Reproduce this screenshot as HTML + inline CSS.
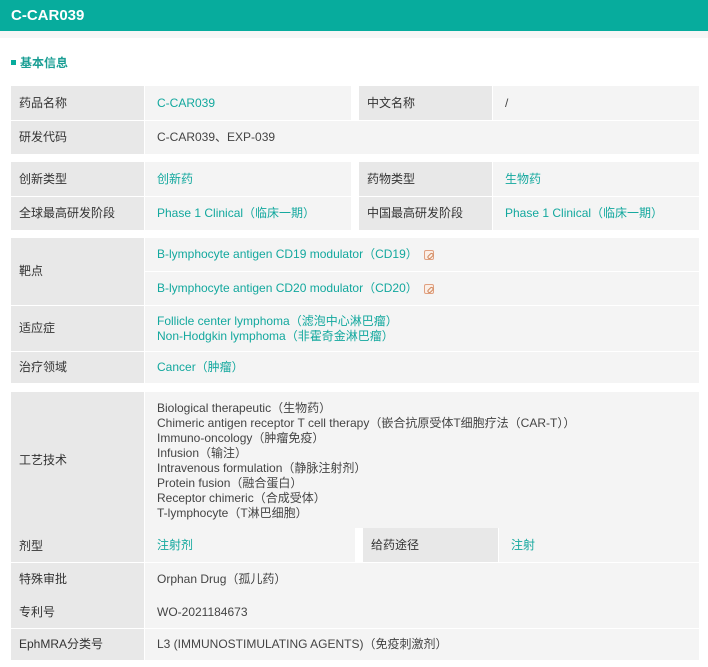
<!DOCTYPE html><html><head><meta charset="utf-8"><style>
*{margin:0;padding:0;box-sizing:border-box}
body{width:708px;height:667px;background:#fff;font-family:"Liberation Sans","Noto Sans CJK SC",sans-serif;font-size:12px;color:#444;position:relative;overflow:hidden}
.hd{position:absolute;left:0;top:0;width:708px;height:31px;background:#07ac9d;color:#fff;font-weight:bold;font-size:15px;line-height:31px;padding-left:11px}
.strip{position:absolute;left:0;top:31px;width:708px;height:7px;background:#f6f6f6}
.st{position:absolute;left:11px;top:55px;color:#1a9e94;font-weight:bold;font-size:12px;line-height:16px}
.st:before{content:"";display:inline-block;width:5px;height:5px;background:#07ac9d;margin-right:4px;vertical-align:2px}
.c{position:absolute;display:flex;align-items:center;padding-left:8px;line-height:15px}
.l{background:#e8e8e8;color:#333}
.v{background:#f4f4f4;padding-left:12px}
.g{color:#13a89e}
.ic{display:inline-block;width:10px;height:10px;border:1px solid #e0a080;border-radius:2px;margin-left:6px;position:relative;background:#fbeee6}
.ic:after{content:"";position:absolute;left:2px;top:3px;width:5px;height:2px;border:1px solid #d08a60;border-radius:2px;transform:rotate(-45deg)}
</style></head><body>
<div class="hd">C-CAR039</div><div class="strip"></div>
<div class="st">基本信息</div>

<div class="c l" style="left:11px;top:86px;width:133px;height:34px">药品名称</div>
<div class="c v g" style="left:145px;top:86px;width:206px;height:34px">C-CAR039</div>
<div class="c l" style="left:359px;top:86px;width:133px;height:34px">中文名称</div>
<div class="c v" style="left:493px;top:86px;width:206px;height:34px">/</div>
<div class="c l" style="left:11px;top:121px;width:133px;height:33px">研发代码</div>
<div class="c v" style="left:145px;top:121px;width:554px;height:33px">C-CAR039、EXP-039</div>

<div class="c l" style="left:11px;top:162px;width:133px;height:34px">创新类型</div>
<div class="c v g" style="left:145px;top:162px;width:206px;height:34px">创新药</div>
<div class="c l" style="left:359px;top:162px;width:133px;height:34px">药物类型</div>
<div class="c v g" style="left:493px;top:162px;width:206px;height:34px">生物药</div>
<div class="c l" style="left:11px;top:197px;width:133px;height:33px">全球最高研发阶段</div>
<div class="c v g" style="left:145px;top:197px;width:206px;height:33px">Phase 1 Clinical（临床一期）</div>
<div class="c l" style="left:359px;top:197px;width:133px;height:33px">中国最高研发阶段</div>
<div class="c v g" style="left:493px;top:197px;width:206px;height:33px">Phase 1 Clinical（临床一期）</div>

<div class="c l" style="left:11px;top:238px;width:133px;height:67px">靶点</div>
<div class="c v g" style="left:145px;top:238px;width:554px;height:33px">B-lymphocyte antigen CD19 modulator（CD19）<span class="ic"></span></div>
<div class="c v g" style="left:145px;top:272px;width:554px;height:33px">B-lymphocyte antigen CD20 modulator（CD20）<span class="ic"></span></div>
<div class="c l" style="left:11px;top:306px;width:133px;height:45px">适应症</div>
<div class="c v g" style="left:145px;top:306px;width:554px;height:45px">Follicle center lymphoma（滤泡中心淋巴瘤）<br>Non-Hodgkin lymphoma（非霍奇金淋巴瘤）</div>
<div class="c l" style="left:11px;top:352px;width:133px;height:31px">治疗领域</div>
<div class="c v g" style="left:145px;top:352px;width:554px;height:31px">Cancer（肿瘤）</div>

<div class="c l" style="left:11px;top:392px;width:133px;height:170px;align-items:flex-start;padding-top:61px">工艺技术</div>
<div class="c l" style="left:11px;top:530px;width:133px;height:32px;background:none">剂型</div>
<div class="c v" style="left:145px;top:392px;width:554px;height:136px;align-items:flex-start;padding-top:9px">Biological therapeutic（生物药）<br>Chimeric antigen receptor T cell therapy（嵌合抗原受体T细胞疗法（CAR-T））<br>Immuno-oncology（肿瘤免疫）<br>Infusion（输注）<br>Intravenous formulation（静脉注射剂）<br>Protein fusion（融合蛋白）<br>Receptor chimeric（合成受体）<br>T-lymphocyte（T淋巴细胞）</div>
<div class="c v g" style="left:145px;top:528px;width:210px;height:34px">注射剂</div>
<div class="c l" style="left:363px;top:528px;width:135px;height:34px">给药途径</div>
<div class="c v g" style="left:499px;top:528px;width:200px;height:34px">注射</div>
<div class="c l" style="left:11px;top:563px;width:133px;height:65px"></div>
<div class="c l" style="left:11px;top:563px;width:133px;height:32px;background:none">特殊审批</div>
<div class="c l" style="left:11px;top:596px;width:133px;height:32px;background:none">专利号</div>
<div class="c v" style="left:145px;top:563px;width:554px;height:65px"></div>
<div class="c v" style="left:145px;top:563px;width:554px;height:32px;background:none">Orphan Drug（孤儿药）</div>
<div class="c v" style="left:145px;top:596px;width:554px;height:32px;background:none">WO-2021184673</div>
<div class="c l" style="left:11px;top:629px;width:133px;height:31px">EphMRA分类号</div>
<div class="c v" style="left:145px;top:629px;width:554px;height:31px">L3 (IMMUNOSTIMULATING AGENTS)（免疫刺激剂）</div>
</body></html>
